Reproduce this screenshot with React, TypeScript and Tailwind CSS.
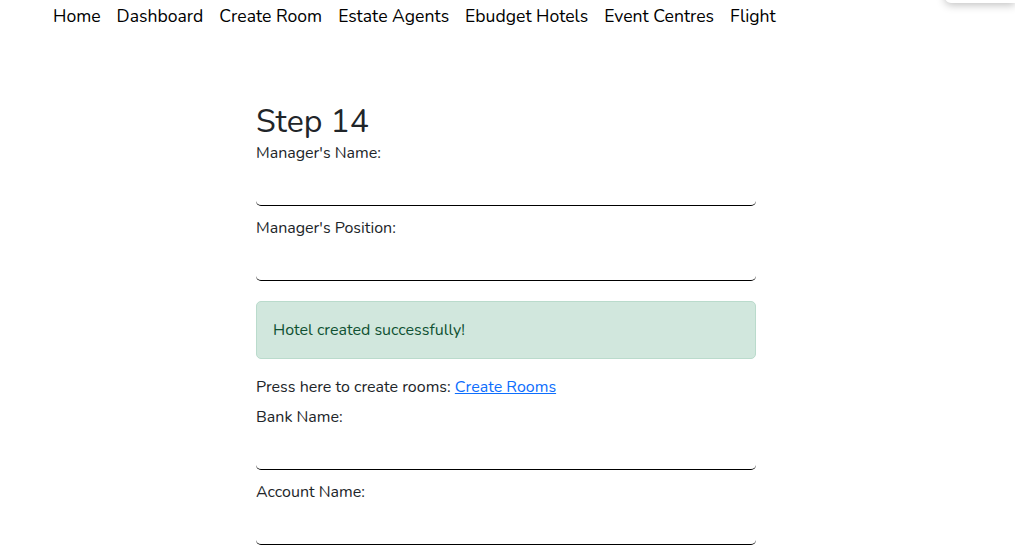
const navLinks = ["Home", "Dashboard", "Create Room", "Estate Agents", "Ebudget Hotels", "Event Centres", "Flight"];

function Field({ label }: { label: string }) {
  return (
    <div className="mb-[10px]">
      <label className="block h-[24px] leading-[24px]">{label}</label>
      <input
        type="text"
        className="mt-[3px] block h-[38px] w-full rounded-[5px] border-b border-black bg-white px-3 outline-none"
      />
    </div>
  );
}

export default function App() {
  return (
    <div className="relative min-h-[554px] overflow-hidden bg-white font-['Nunito','Noto_Sans',sans-serif] text-[16px] text-[#212529]">
      <div className="absolute right-0 top-[-40px] h-[43px] w-[70px] rounded-bl-md bg-white shadow-[0_2px_8px_rgba(0,0,0,0.25)]" />
      <nav className="flex h-[33px] items-center pl-[45px] text-[17.6px]">
        {navLinks.map((l) => (
          <a key={l} href="#" className="px-2 text-black">
            {l}
          </a>
        ))}
      </nav>
      <div className="ml-[256px] w-[500px] pt-[70px]">
        <h2 className="h-[38px] text-[32px] leading-[38px]">Step 14</h2>
        <Field label="Manager's Name:" />
        <Field label="Manager's Position:" />
        {/* margins collapse with the field above, so 20 here */}
        <div className="mt-[20px] mb-4 rounded-[5px] border border-[#badbcc] bg-[#d1e7dd] px-4 py-4 leading-[24px] text-[#0f5132]">
          Hotel created successfully!
        </div>
        <p className="mb-[6px] leading-[24px]">
          Press here to create rooms:{" "}
          <a href="#" className="text-[#0d6efd] underline">
            Create Rooms
          </a>
        </p>
        <Field label="Bank Name:" />
        <Field label="Account Name:" />
      </div>
    </div>
  );
}
